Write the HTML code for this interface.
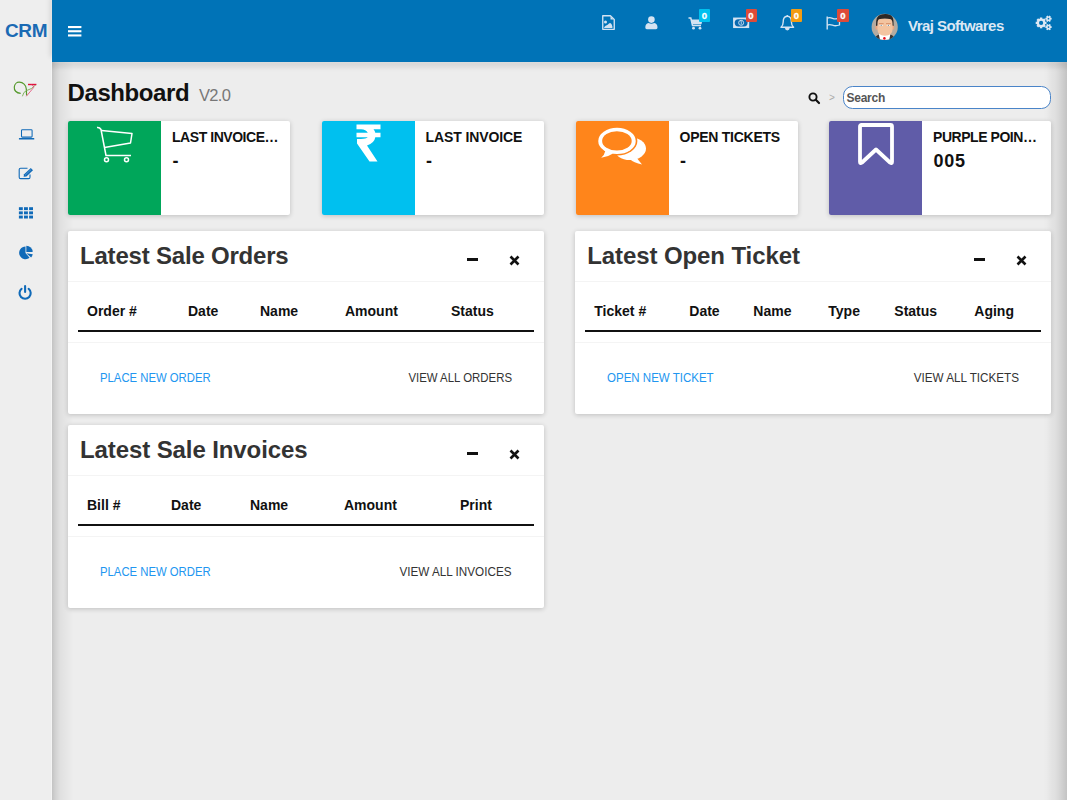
<!DOCTYPE html>
<html><head><meta charset="utf-8">
<style>
*{margin:0;padding:0;box-sizing:border-box}
html,body{width:1067px;height:800px;overflow:hidden;background:#ededed;font-family:"Liberation Sans",sans-serif}
.abs{position:absolute}
svg{position:absolute;overflow:visible}
#side{position:absolute;left:0;top:0;width:52px;height:800px;background:#eeeeee;border-right:1px solid #f4f4f4}
#crm{position:absolute;left:5px;top:21.4px;font-size:19px;font-weight:bold;color:#1a6ab4;line-height:1;letter-spacing:-0.4px}
#hdr{position:absolute;left:52px;top:0;width:1015px;height:62px;background:#0073b7;box-shadow:-3px -4px 5px -1px rgba(0,0,0,.1)}
#content{position:absolute;left:52px;top:62px;width:1015px;height:738px;background:#ededed}
#shL{position:absolute;left:52px;top:62px;width:22px;height:738px;background:linear-gradient(to right,rgba(0,0,0,.175) 0,rgba(0,0,0,.105) 4px,rgba(0,0,0,.06) 8px,rgba(0,0,0,.038) 12px,rgba(0,0,0,.01) 19px,rgba(0,0,0,0) 22px)}
#shR{position:absolute;left:1043px;top:62px;width:24px;height:738px;background:linear-gradient(to left,rgba(0,0,0,.175) 0,rgba(0,0,0,.135) 4px,rgba(0,0,0,.089) 8px,rgba(0,0,0,.055) 12px,rgba(0,0,0,.038) 16px,rgba(0,0,0,.013) 20px,rgba(0,0,0,0) 24px)}
#shT{position:absolute;left:52px;top:62px;width:1015px;height:12px;background:linear-gradient(to bottom,rgba(0,0,0,.072) 0,rgba(0,0,0,.088) 2px,rgba(0,0,0,.067) 4px,rgba(0,0,0,.042) 6px,rgba(0,0,0,.013) 8px,rgba(0,0,0,0) 10px)}
.t{position:absolute;white-space:nowrap;line-height:1}
.sx{display:inline-block;transform-origin:0 0}
.ibox{position:absolute;top:121px;width:222px;height:94px;background:#fff;border-radius:2px;box-shadow:0 1px 5px rgba(0,0,0,.2)}
.ibox .ic{position:absolute;left:0;top:0;width:93px;height:94px;border-radius:2px 0 0 2px}
.ibox .lbl{position:absolute;left:104px;top:8.8px;font-size:14px;font-weight:bold;color:#111;white-space:nowrap;line-height:1}
.ibox .val{position:absolute;left:104.5px;top:30.8px;font-size:18px;font-weight:bold;color:#111;white-space:nowrap;line-height:1}
.panel{position:absolute;width:476px;height:183px;background:#fff;border-radius:2px;box-shadow:0 1px 5px rgba(0,0,0,.2)}
.ptitle{position:absolute;left:12px;top:13.3px;font-size:24px;font-weight:bold;color:#333;white-space:nowrap;line-height:1;letter-spacing:-0.2px}
.psep{position:absolute;left:0;top:50px;width:100%;height:1px;background:#f4f4f4}
.psep2{position:absolute;left:0;top:111px;width:100%;height:1px;background:#f4f4f4}
.thick{position:absolute;left:10px;right:10px;top:99px;height:2px;background:#111}
.th{position:absolute;top:72.5px;font-size:14px;font-weight:bold;color:#111;white-space:nowrap;line-height:1}
.lnk{position:absolute;top:140.3px;font-size:13px;color:#2196f0;white-space:nowrap;line-height:1}
.lnk2{position:absolute;top:140.3px;font-size:13px;color:#333;white-space:nowrap;line-height:1}
.lnk span{display:inline-block;transform:scaleX(.87);transform-origin:0 0}.lnk2{text-align:right}.lnk2 span{display:inline-block;transform:scaleX(.89);transform-origin:100% 0}
.badge{position:absolute;top:9px;width:11px;height:13px;border-radius:1px;color:#fff;font-size:9.5px;font-weight:bold;text-align:center;line-height:14px;-webkit-text-stroke:0.3px #fff}
.pmin{position:absolute;left:399px;top:27px;width:11px;height:3px;background:#111}
</style></head><body>
<div id="content"></div><div id="shL"></div><div id="shR"></div><div id="shT"></div>
<div id="side">
  <div id="crm">CRM</div>
  <!-- logo -->
  <svg style="left:10px;top:78px" width="30" height="22" viewBox="0 0 30 22">
    <path d="M10.7 15.3 C6 15.2 4 12 4.3 9 C4.6 6 7 4.1 9.3 4.2 C13 4.3 16.1 7 16.3 11 L16.6 17.4" fill="none" stroke="#55992c" stroke-width="1.2"/>
    <path d="M12.4 18.3 Q13.5 13.5 16.5 12.6 Q21.5 11.5 25.9 6.7" fill="none" stroke="#7aab55" stroke-width="0.9"/>
    <path d="M18 6.5 H26.4" stroke="#e0103a" stroke-width="1.4"/>
    <path d="M21.5 6.8 Q24.2 7.6 23.6 9.6 L16.3 18.3" fill="none" stroke="#e4507a" stroke-width="0.85"/>
  </svg>
  <!-- laptop -->
  <svg style="left:18px;top:129px" width="17" height="11" viewBox="0 0 17 11">
    <rect x="3.5" y="0.7" width="10.6" height="7.4" rx="0.9" fill="none" stroke="#106ab8" stroke-width="1.05"/>
    <rect x="0.9" y="8.9" width="15.4" height="1.6" rx="0.5" fill="#106ab8"/>
  </svg>
  <!-- edit -->
  <svg style="left:18px;top:167px" width="16" height="13" viewBox="0 0 16 13">
    <path d="M9.5 1.2 H2.6 Q1.2 1.2 1.2 2.6 V10.2 Q1.2 11.6 2.6 11.6 H10.6 Q12 11.6 12 10.2 V7.5" fill="none" stroke="#106ab8" stroke-width="1.1"/>
    <path d="M5.6 9.8 L6.1 7.3 L12.8 1 L15 3.2 L8.4 9.5 Z" fill="#106ab8"/>
    <path d="M7 8.3 L13.2 2.4" stroke="#9cc0e4" stroke-width="0.5"/>
  </svg>
  <!-- grid -->
  <svg style="left:18px;top:207px" width="17" height="12" viewBox="0 0 17 12">
    <g fill="#106ab8">
    <rect x="0.9" y="0.2" width="3.9" height="2.9"/><rect x="6" y="0.2" width="3.9" height="2.9"/><rect x="11.1" y="0.2" width="3.9" height="2.9"/>
    <rect x="0.9" y="4.4" width="3.9" height="2.9"/><rect x="6" y="4.4" width="3.9" height="2.9"/><rect x="11.1" y="4.4" width="3.9" height="2.9"/>
    <rect x="0.9" y="8.6" width="3.9" height="2.9"/><rect x="6" y="8.6" width="3.9" height="2.9"/><rect x="11.1" y="8.6" width="3.9" height="2.9"/>
    </g>
  </svg>
  <!-- pie -->
  <svg style="left:18px;top:245px" width="16" height="15" viewBox="0 0 16 15">
    <path d="M7.5 7.9 L11.58 12.76 A6.35 6.35 0 1 1 7.5 1.55 Z" fill="#106ab8"/>
    <path d="M8.3 7.1 V0.75 A6.35 6.35 0 0 1 14.65 7.1 Z" fill="#106ab8"/>
    <path d="M8.4 8.3 L14.69 9.18 A6.35 6.35 0 0 1 13.12 12.55 Z" fill="#106ab8"/>
  </svg>
  <!-- power -->
  <svg style="left:18px;top:285px" width="14" height="15" viewBox="0 0 14 15">
    <path d="M3.6 3.8 A5.6 5.6 0 1 0 10.6 3.8" fill="none" stroke="#106ab8" stroke-width="2.1" stroke-linecap="round"/>
    <path d="M7.1 1 V7" stroke="#106ab8" stroke-width="2.1" stroke-linecap="round"/>
  </svg>
</div>
<div id="hdr"></div>
<!-- hamburger -->
<svg style="left:68px;top:26px" width="14" height="11" viewBox="0 0 14 11">
  <g fill="#fff"><rect x="0" y="0" width="13.4" height="2.1"/><rect x="0" y="4.2" width="13.4" height="2.1"/><rect x="0" y="8.4" width="13.4" height="2.1"/></g>
</svg>
<!-- header icons -->
<g>
<svg style="left:602px;top:15px" width="14" height="16" viewBox="0 0 14 16">
  <path d="M0.75 0.75 H8.4 L12.25 4.6 V14.35 H0.75 Z" fill="none" stroke="#d4e3f2" stroke-width="1.35" stroke-linejoin="round"/>
  <path d="M8.5 1.6 L11.4 4.5 H8.5 Z" fill="#d4e3f2"/>
  <circle cx="3.5" cy="7.1" r="1.5" fill="#d4e3f2"/>
  <path d="M2 13.1 L2.4 12 Q3.5 10.5 4.8 10.3 Q6 9.5 7 8.6 Q8 7.6 9 8.6 Q10 9.8 10.4 11.5 V13.1 Z" fill="#d4e3f2"/>
</svg>
<svg style="left:645px;top:16px" width="13" height="14" viewBox="0 0 13 14">
  <circle cx="6.4" cy="3.6" r="3.3" fill="#d4e3f2"/>
  <path d="M0.3 11.5 Q0.3 7.5 3.5 7 Q6.4 8.6 9.3 7 Q12.5 7.5 12.5 11.5 Q12.5 13.3 11 13.3 H1.8 Q0.3 13.3 0.3 11.5 Z" fill="#d4e3f2"/>
</svg>
<svg style="left:688px;top:17px" width="15" height="13" viewBox="0 0 15 13">
  <path d="M0.5 1 H2.8 L4.5 8.5 H13" fill="none" stroke="#d4e3f2" stroke-width="1.5"/>
  <path d="M3 2.5 H14.5 L13.5 7.2 H4.2 Z" fill="#d4e3f2"/>
  <circle cx="5.5" cy="11.2" r="1.4" fill="#d4e3f2"/><circle cx="12" cy="11.2" r="1.4" fill="#d4e3f2"/>
</svg>
<svg style="left:733px;top:17px" width="17" height="12" viewBox="0 0 17 12">
  <rect x="0.85" y="1.3" width="14.6" height="9" fill="#d4e3f2" stroke="#d4e3f2" stroke-width="1.5"/>
  <rect x="1.7" y="2.2" width="12.9" height="7.2" rx="3.6" fill="#0a6ab0"/>
  <circle cx="8.15" cy="5.8" r="2.5" fill="none" stroke="#d4e3f2" stroke-width="0.9"/>
  <path d="M7.6 4.6 L8.3 4.3 V7.4" fill="none" stroke="#d4e3f2" stroke-width="0.8"/>
</svg>
<svg style="left:780px;top:15px" width="15" height="16" viewBox="0 0 15 16">
  <path d="M7.3 1.2 C3.8 1.2 3.2 4.5 3.2 7 C3.2 10 2 11.5 1 12.3 H13.6 C12.6 11.5 11.4 10 11.4 7 C11.4 4.5 10.8 1.2 7.3 1.2 Z" fill="none" stroke="#d4e3f2" stroke-width="1.4" stroke-linejoin="round"/>
  <path d="M4.9 13 H9.7 Q9.5 15.3 7.3 15.4 Q5.1 15.3 4.9 13 Z" fill="#d4e3f2"/>
  <circle cx="7.3" cy="1" r="0.9" fill="#d4e3f2"/>
</svg>
<svg style="left:826px;top:16px" width="15" height="14" viewBox="0 0 15 14">
  <path d="M1.2 0.5 V13.5" stroke="#d4e3f2" stroke-width="1.4"/>
  <path d="M1.2 2.2 Q3.5 1 6.5 2.3 Q9.5 3.6 13.5 2.2 V9 Q9.5 10.4 6.5 9.2 Q3.5 8 1.2 9.2" fill="none" stroke="#d4e3f2" stroke-width="1.3"/>
</svg>
</g>
<div class="badge" style="left:699px;background:#00c0ef">0</div>
<div class="badge" style="left:745.5px;background:#dd4b39">0</div>
<div class="badge" style="left:791px;background:#f39c12">0</div>
<div class="badge" style="left:837.2px;width:11.4px;background:#dd4b39">0</div>
<!-- avatar -->
<svg style="left:868px;top:10px" width="34" height="32" viewBox="0 0 34 32">
  <defs><clipPath id="cc"><circle cx="16.7" cy="16.9" r="13.1"/></clipPath></defs>
  <circle cx="16.7" cy="16.9" r="13.1" fill="#b3aba1"/>
  <g clip-path="url(#cc)">
    <path d="M6 32 Q7 25.5 11 24.5 H22.5 Q26.5 25.5 27.5 32 Z" fill="#3a3532"/>
    <path d="M10.8 24 H22.4 L21 31 H12.2 Z" fill="#ffffff"/>
    <circle cx="16.4" cy="28.4" r="1.3" fill="#e8101a"/>
    <ellipse cx="8.5" cy="17.4" rx="1.2" ry="2.4" fill="#e9a580"/>
    <ellipse cx="25" cy="17.4" rx="1.2" ry="2.4" fill="#e9a580"/>
    <path d="M9.4 10 Q9.4 8.4 16.9 8.4 Q24.6 8.4 24.6 10 V19 Q24.6 25.6 16.9 25.8 Q9.4 25.6 9.4 19 Z" fill="#f3c4a0"/>
    <path d="M8 16 Q7.4 5.5 13 4.4 Q16.8 3.6 21 4.3 Q26.2 5.2 25.6 16 L24.6 15.5 Q24.8 10.5 23 9.2 Q16.8 8 10.8 9.2 Q9.2 10.5 9.4 15.5 Z" fill="#2d2927"/>
    <rect x="10.8" y="13.2" width="4.8" height="0.9" fill="#d98a62"/>
    <rect x="18" y="13.2" width="4.8" height="0.9" fill="#d98a62"/>
    <rect x="11.6" y="14.9" width="3.2" height="1.1" fill="#f4f4f4"/>
    <rect x="18.8" y="14.9" width="3.2" height="1.1" fill="#f4f4f4"/>
    <circle cx="13.2" cy="15.45" r="0.6" fill="#7a8fa0"/>
    <circle cx="20.4" cy="15.45" r="0.6" fill="#7a8fa0"/>
  </g>
</svg>
<div class="t" style="left:908px;top:18px;font-size:15px;font-weight:bold;color:#dce8f4;letter-spacing:-0.55px">Vraj Softwares</div>
<!-- cogs -->
<svg style="left:1035px;top:15px" width="17" height="16" viewBox="0 0 17 16">
  <g fill="#dce8f4">
    <circle cx="6.1" cy="7.9" r="4.3"/>
    <g transform="translate(6.1 7.9)"><rect x="-1.2" y="-5.4" width="2.4" height="10.8"/><rect x="-1.2" y="-5.4" width="2.4" height="10.8" transform="rotate(45)"/><rect x="-1.2" y="-5.4" width="2.4" height="10.8" transform="rotate(90)"/><rect x="-1.2" y="-5.4" width="2.4" height="10.8" transform="rotate(135)"/></g>
    <circle cx="13.5" cy="3.7" r="2.3"/>
    <g transform="translate(13.5 3.7)"><rect x="-0.9" y="-3.15" width="1.8" height="6.3" transform="rotate(30)"/><rect x="-0.9" y="-3.15" width="1.8" height="6.3" transform="rotate(90)"/><rect x="-0.9" y="-3.15" width="1.8" height="6.3" transform="rotate(150)"/></g>
    <circle cx="13.5" cy="12.1" r="2.3"/>
    <g transform="translate(13.5 12.1)"><rect x="-0.9" y="-3.15" width="1.8" height="6.3" transform="rotate(30)"/><rect x="-0.9" y="-3.15" width="1.8" height="6.3" transform="rotate(90)"/><rect x="-0.9" y="-3.15" width="1.8" height="6.3" transform="rotate(150)"/></g>
  </g>
  <circle cx="6.1" cy="7.9" r="2.1" fill="#0073b7"/>
  <circle cx="13.5" cy="3.7" r="0.85" fill="#0073b7"/>
  <circle cx="13.5" cy="12.1" r="0.85" fill="#0073b7"/>
</svg>

<!-- Dashboard title -->
<div class="t" style="left:67.5px;top:81.2px;font-size:24px;font-weight:bold;color:#111;letter-spacing:-0.4px">Dashboard</div>
<div class="t" style="left:199px;top:86.8px;font-size:16.5px;color:#777;letter-spacing:-0.7px">V2.0</div>

<!-- search -->
<svg style="left:808px;top:92px" width="13" height="12" viewBox="0 0 13 12">
  <circle cx="5" cy="5" r="3.6" fill="none" stroke="#111" stroke-width="1.9"/>
  <path d="M7.8 7.8 L11 11" stroke="#111" stroke-width="2.2" stroke-linecap="round"/>
</svg>
<div class="t" style="left:829px;top:93px;font-size:10px;color:#aaa">&gt;</div>
<div class="abs" style="left:843px;top:85.5px;width:208px;height:23.6px;border:1.2px solid #4a84c8;border-radius:9.5px;background:#fff"></div>
<div class="t" style="left:846.5px;top:91.5px;font-size:12px;font-weight:bold;color:#555;letter-spacing:-0.25px">Search</div>

<!-- info boxes -->
<div class="ibox" style="left:68px"><div class="ic" style="background:#00a65a">
  <svg style="left:28px;top:5px" width="38" height="38" viewBox="0 0 38 38">
    <path d="M1 1.5 Q3.5 1 5 3.5 L10 29.5 H35" fill="none" stroke="#fff" stroke-width="1.5" stroke-linejoin="round"/>
    <path d="M5.5 4.5 L36 7.5 L34.5 17 L8.5 21.5" fill="none" stroke="#fff" stroke-width="1.5" stroke-linejoin="round"/>
    <circle cx="10.5" cy="33.8" r="2" fill="none" stroke="#fff" stroke-width="1.5"/>
    <circle cx="30.5" cy="33.8" r="2" fill="none" stroke="#fff" stroke-width="1.5"/>
  </svg>
</div><div class="lbl" style="letter-spacing:-0.45px">LAST INVOICE…</div><div class="val">-</div></div>
<div class="ibox" style="left:321.5px;width:222.5px"><div class="ic" style="background:#00c0ef">
  <svg style="left:34px;top:2.9px;transform:scaleY(1.028);transform-origin:0 0" width="26" height="38" viewBox="0 0 26 38" preserveAspectRatio="none">
    <path d="M0.5 0.5 H24.5 V5 H17.5 Q19 6.5 19.3 8.6 H24.5 V13 H19.3 Q18.5 18.5 11 21 L21.5 36.5 H13.5 L1 19 V14.5 H5 Q10 14.5 11.8 13 H0.5 V8.6 H11.8 Q10 5 5 5 H0.5 Z" fill="#fff"/>
  </svg>
</div><div class="lbl" style="letter-spacing:-0.1px">LAST INVOICE</div><div class="val">-</div></div>
<div class="ibox" style="left:575.5px;width:222.5px"><div class="ic" style="background:#ff851b">
  <svg style="left:0;top:0" width="93" height="93" viewBox="0 0 93 93">
    <ellipse cx="54" cy="27.6" rx="16" ry="11.4" fill="#fff"/>
    <path d="M60 36 L66 43.6 Q58 42 53 37.5 Z" fill="#fff"/>
    <ellipse cx="41" cy="19.9" rx="20.4" ry="14.7" fill="#ff851b"/>
    <ellipse cx="41" cy="19.9" rx="18.75" ry="13.1" fill="#fff"/>
    <path d="M29.5 29.5 Q28.5 34 25.2 36.8 Q32 36 37 32.5 Z" fill="#fff"/>
    <ellipse cx="40.9" cy="19.9" rx="14.8" ry="9.7" fill="#ff851b"/>
  </svg>
</div><div class="lbl" style="letter-spacing:-0.25px">OPEN TICKETS</div><div class="val">-</div></div>
<div class="ibox" style="left:829px"><div class="ic" style="background:#605ca8">
  <svg style="left:29px;top:2px" width="36" height="42" viewBox="0 0 36 42">
    <path d="M2 2.5 Q2 1 3.5 1 H32.5 Q34 1 34 2.5 V38 Q34 40 32 38.5 L18 25.5 L4 38.5 Q2 40 2 38 Z" fill="none" stroke="#fff" stroke-width="3.8" stroke-linejoin="round" transform="translate(0 1)"/>
  </svg>
</div><div class="lbl" style="letter-spacing:-0.45px">PURPLE POIN…</div><div class="val" style="letter-spacing:0.8px;top:30.8px">005</div></div>

<!-- panels -->
<div class="panel" style="left:68px;top:231px"><div class="psep"></div><div class="psep2"></div><div class="thick"></div>
  <div class="ptitle">Latest Sale Orders</div>
  <div class="pmin"></div>
  <svg style="left:441px;top:24px" width="11" height="11" viewBox="0 0 11 11"><path d="M1.5 1.5 L9.5 9.5 M9.5 1.5 L1.5 9.5" stroke="#111" stroke-width="2.6"/></svg>
  <div class="th" style="left:19px">Order #</div>
  <div class="th" style="left:120px">Date</div>
  <div class="th" style="left:192px">Name</div>
  <div class="th" style="left:277px">Amount</div>
  <div class="th" style="left:383px">Status</div>
  <div class="lnk" style="left:32px"><span>PLACE NEW ORDER</span></div>
  <div class="lnk2" style="right:32px"><span style="transform:scaleX(.878)">VIEW ALL ORDERS</span></div>
</div>
<div class="panel" style="left:575.3px;top:231px;width:475.7px"><div class="psep"></div><div class="psep2"></div><div class="thick"></div>
  <div class="ptitle" style="letter-spacing:-0.1px">Latest Open Ticket</div>
  <div class="pmin"></div>
  <svg style="left:441px;top:24px" width="11" height="11" viewBox="0 0 11 11"><path d="M1.5 1.5 L9.5 9.5 M9.5 1.5 L1.5 9.5" stroke="#111" stroke-width="2.6"/></svg>
  <div class="th" style="left:19px">Ticket #</div>
  <div class="th" style="left:114px">Date</div>
  <div class="th" style="left:178px">Name</div>
  <div class="th" style="left:253px">Type</div>
  <div class="th" style="left:319px">Status</div>
  <div class="th" style="left:399px">Aging</div>
  <div class="lnk" style="left:32px"><span style="transform:scaleX(.886)">OPEN NEW TICKET</span></div>
  <div class="lnk2" style="right:32px"><span style="transform:scaleX(.9)">VIEW ALL TICKETS</span></div>
</div>
<div class="panel" style="left:68px;top:425px"><div class="psep"></div><div class="psep2"></div><div class="thick"></div>
  <div class="ptitle" style="letter-spacing:-0.1px">Latest Sale Invoices</div>
  <div class="pmin"></div>
  <svg style="left:441px;top:24px" width="11" height="11" viewBox="0 0 11 11"><path d="M1.5 1.5 L9.5 9.5 M9.5 1.5 L1.5 9.5" stroke="#111" stroke-width="2.6"/></svg>
  <div class="th" style="left:19px">Bill #</div>
  <div class="th" style="left:103px">Date</div>
  <div class="th" style="left:182px">Name</div>
  <div class="th" style="left:276px">Amount</div>
  <div class="th" style="left:392px">Print</div>
  <div class="lnk" style="left:32px"><span>PLACE NEW ORDER</span></div>
  <div class="lnk2" style="right:32px"><span style="transform:scaleX(.9)">VIEW ALL INVOICES</span></div>
</div>
</body></html>
